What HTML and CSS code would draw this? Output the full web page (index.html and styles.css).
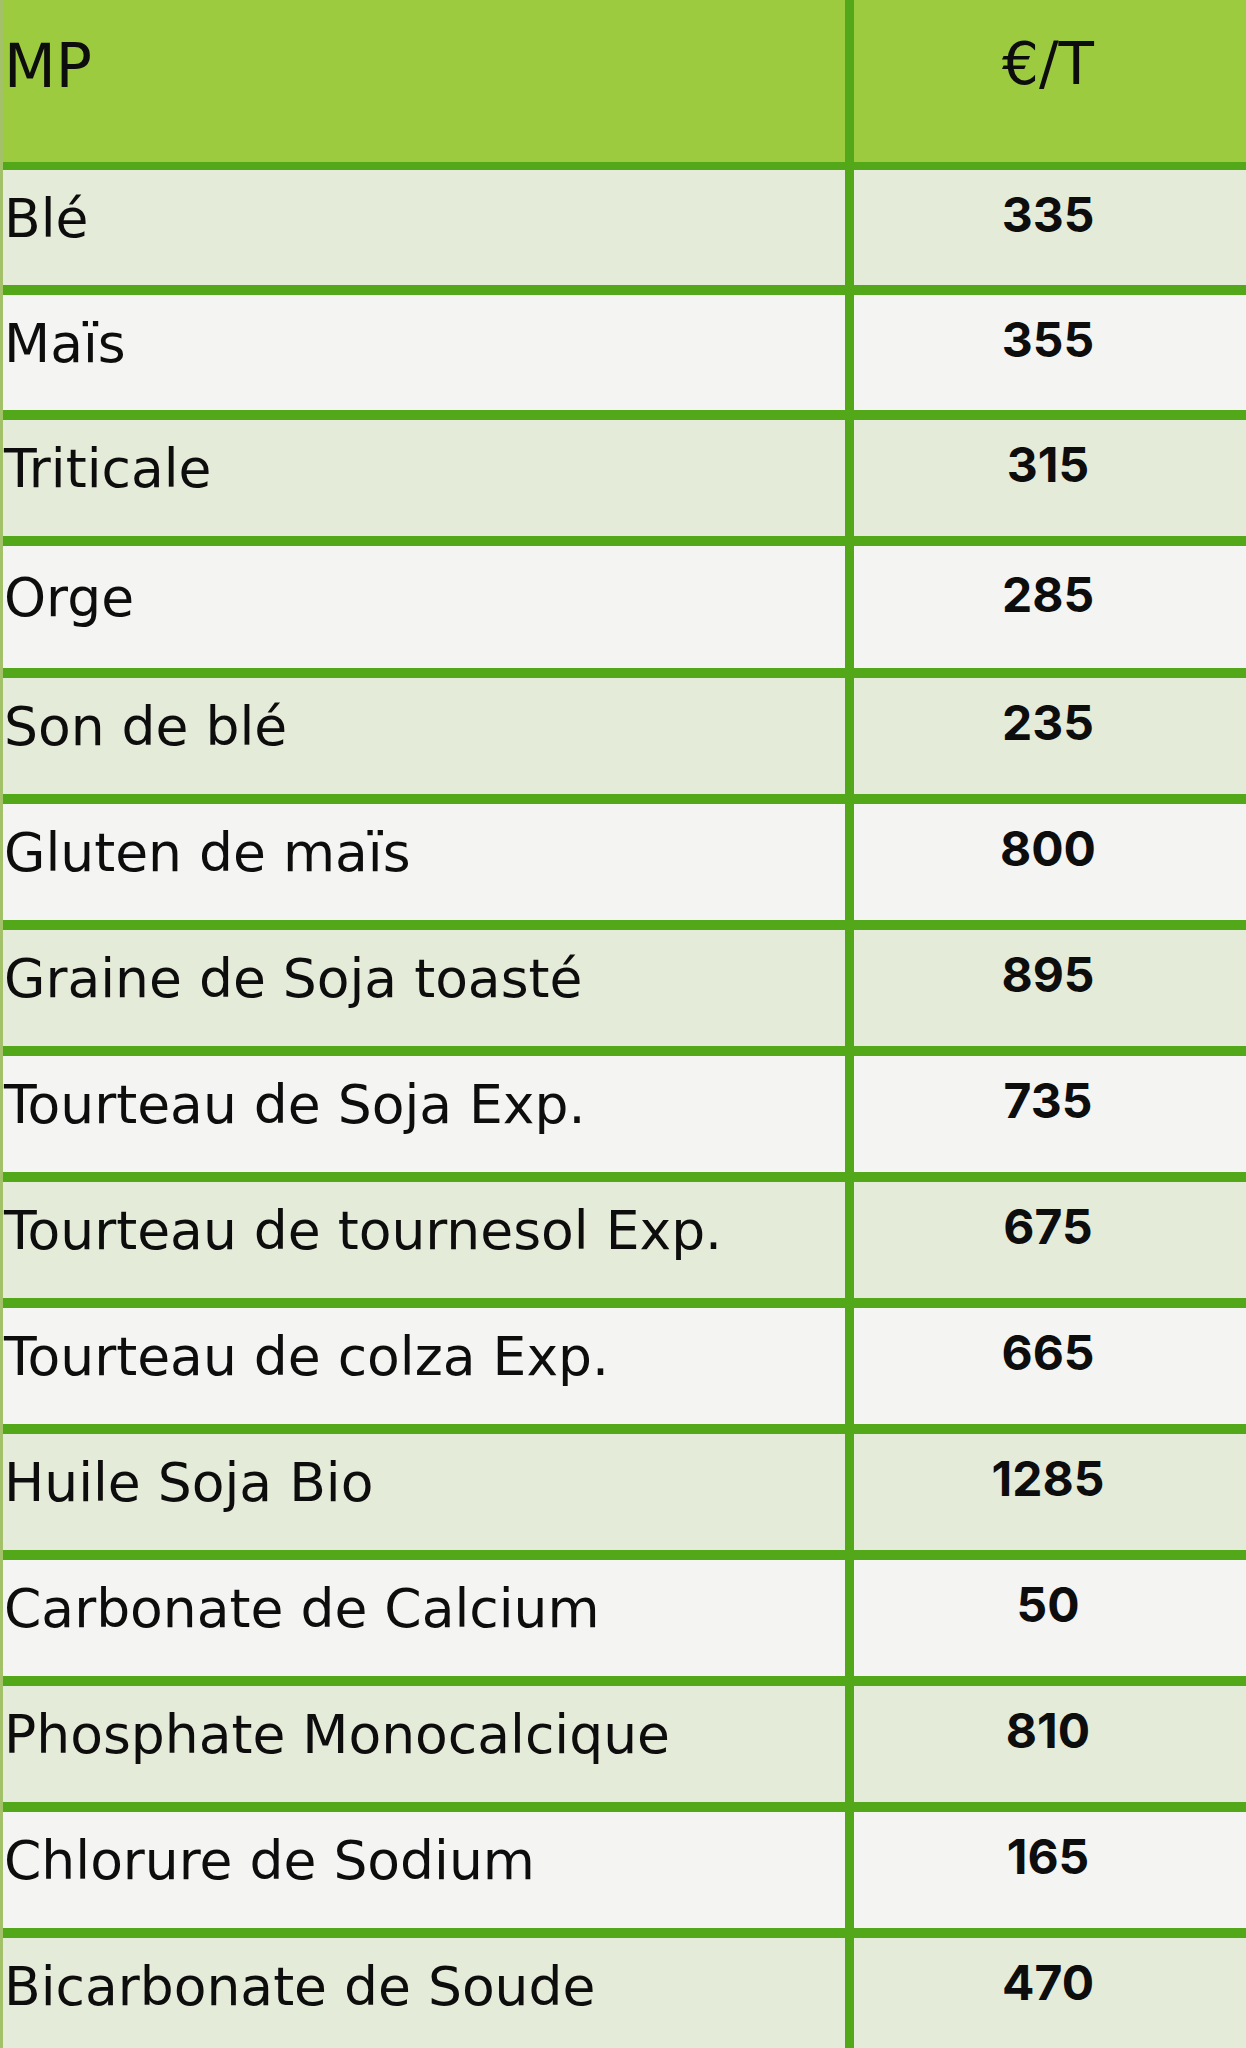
FILE: index.html
```html
<!DOCTYPE html>
<html lang="fr">
<head>
<meta charset="utf-8">
<title>Prix matières premières</title>
<link rel="stylesheet" href="styles.css">
</head>
<body>
<div class="table">
  <div class="row head">
    <div class="cell name">MP</div>
    <div class="cell price">€/T</div>
  </div>
  <div class="row shade"><div class="cell name">Blé</div><div class="cell price">335</div></div>
  <div class="row light"><div class="cell name">Maïs</div><div class="cell price">355</div></div>
  <div class="row shade"><div class="cell name">Triticale</div><div class="cell price">315</div></div>
  <div class="row light"><div class="cell name">Orge</div><div class="cell price">285</div></div>
  <div class="row shade"><div class="cell name">Son de blé</div><div class="cell price">235</div></div>
  <div class="row light"><div class="cell name">Gluten de maïs</div><div class="cell price">800</div></div>
  <div class="row shade"><div class="cell name">Graine de Soja toasté</div><div class="cell price">895</div></div>
  <div class="row light"><div class="cell name">Tourteau de Soja Exp.</div><div class="cell price">735</div></div>
  <div class="row shade"><div class="cell name">Tourteau de tournesol Exp.</div><div class="cell price">675</div></div>
  <div class="row light"><div class="cell name">Tourteau de colza Exp.</div><div class="cell price">665</div></div>
  <div class="row shade"><div class="cell name">Huile Soja Bio</div><div class="cell price">1285</div></div>
  <div class="row light"><div class="cell name">Carbonate de Calcium</div><div class="cell price">50</div></div>
  <div class="row shade"><div class="cell name">Phosphate Monocalcique</div><div class="cell price">810</div></div>
  <div class="row light"><div class="cell name">Chlorure de Sodium</div><div class="cell price">165</div></div>
  <div class="row shade last"><div class="cell name">Bicarbonate de Soude</div><div class="cell price">470</div></div>
</div>
</body>
</html>
```
FILE: styles.css
```css
html, body {
  margin: 0;
  padding: 0;
  background: #f4f4f2;
}

.table {
  width: 1246px;
  display: flex;
  flex-direction: column;
  border-left: 3px solid #a3c168;
  box-sizing: border-box;
  color: #0d0d0d;
}

.row {
  display: grid;
  grid-template-columns: 842px 392px;
  column-gap: 9px;
  background: #52a818;
  border-bottom: 10px solid #52a818;
  height: 116px;
}

.row.head {
  height: 162px;
  border-bottom-width: 8px;
}

.row:nth-child(2),
.row:nth-child(3) {
  height: 115px;
}

.row:nth-child(5) {
  height: 122px;
}

.row.last {
  border-bottom: none;
}

.cell {
  box-sizing: border-box;
}

.head .cell { background: #9ccb3f; }
.shade .cell { background: #e5ebd9; }
.light .cell { background: #f4f4f2; }

.name {
  font-family: "DejaVu Sans", sans-serif;
  font-size: 53.5px;
  line-height: 1;
  padding-top: 22px;
  text-indent: 1px;
  white-space: nowrap;
}

.row:nth-child(5) .name,
.row:nth-child(5) .price {
  padding-top: 25px;
}

.price {
  font-family: Inter, "Liberation Sans", sans-serif;
  font-weight: 700;
  font-size: 48px;
  line-height: 1;
  padding-top: 21px;
  text-align: center;
  padding-right: 4px;
}

.head .name,
.head .price {
  font-family: "DejaVu Sans", sans-serif;
  font-weight: 400;
  font-size: 60px;
  line-height: 1;
  padding-top: 36px;
}

.head .price {
  font-size: 58px;
  padding-top: 35px;
}
```
